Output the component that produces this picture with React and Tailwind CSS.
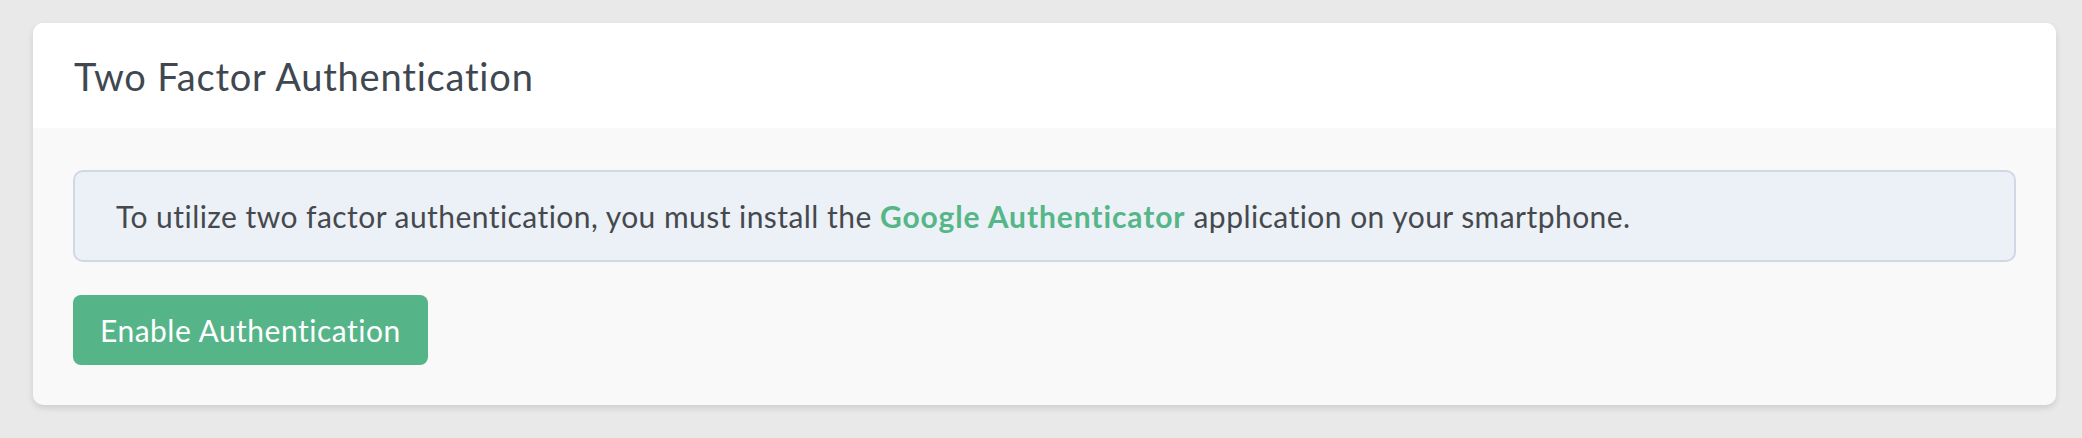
export default function App() {
  return (
    <div className="min-h-[438px] w-full bg-[#e9e9e9] pl-[33px] pr-[26px] pt-[23px] font-['Lato',sans-serif]">
      <div className="overflow-hidden rounded-[10px] bg-[#f9f9f9] shadow-[0_3px_6px_rgba(0,0,0,0.12)]">
        {/* Header */}
        <div className="flex h-[105px] items-center bg-white px-[41px]">
          <h2 className="text-[38px] font-normal leading-none tracking-[0.8px] text-[#3f4750]">Two Factor Authentication</h2>
        </div>

        {/* Body */}
        <div className="px-[40px] pb-[40px] pt-[42px]">
          <div className="flex h-[92px] items-center rounded-[10px] border-2 border-[#cfd8e4] bg-[#ecf0f7] px-[41px]">
            <p className="text-[30px] leading-none tracking-[0.45px] text-[#45494d]">
              To utilize two factor authentication, you must install the{" "}
              <span className="font-bold tracking-[0.9px] text-[#55b687]">Google Authenticator</span> application on your smartphone.
            </p>
          </div>

          <button className="mt-[33px] flex h-[70px] items-center rounded-[8px] bg-[#55b589] px-[27px] text-[30px] leading-none tracking-[0.5px] text-white">
            Enable Authentication
          </button>
        </div>
      </div>
    </div>
  );
}
